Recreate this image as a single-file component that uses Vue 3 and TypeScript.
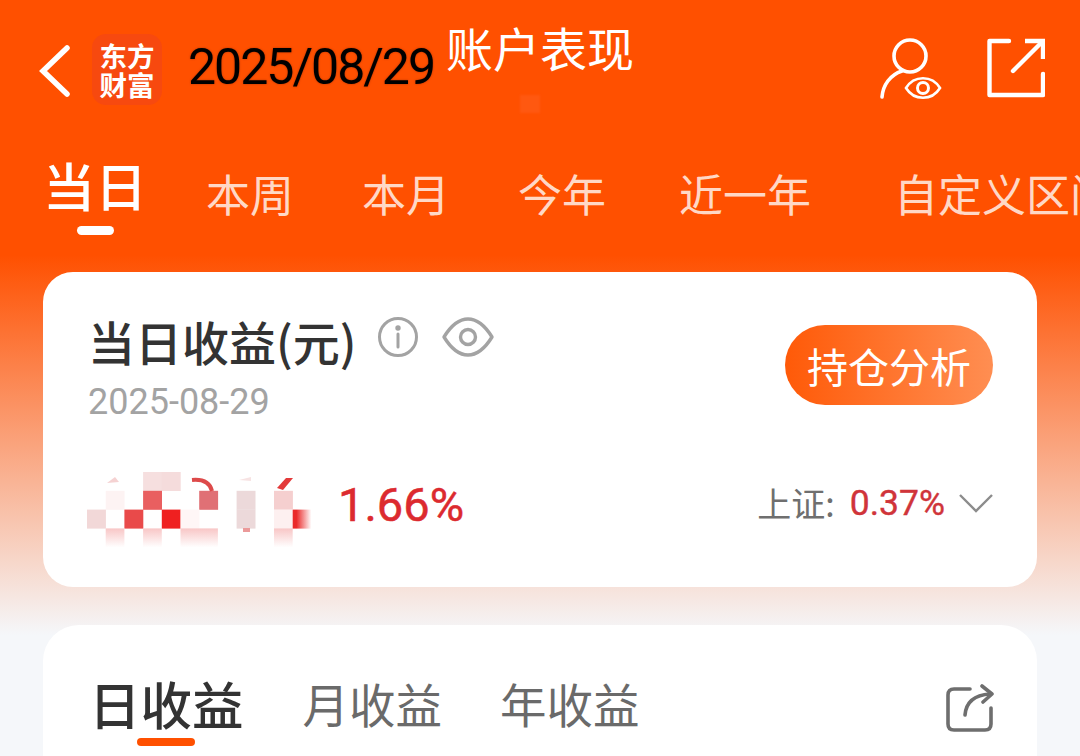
<template>
  <div class="page">
    <header class="topbar">
      <svg class="back" width="32" height="52" viewBox="0 0 32 52">
        <path d="M28 3 L4 26 L28 49" fill="none" stroke="#fff" stroke-width="5.5" stroke-linecap="round" stroke-linejoin="miter" />
      </svg>
      <div class="logo"><span>东方</span><span>财富</span></div>
      <span class="date">2025/08/29</span>
      <span class="title">账户表现</span>
      <i class="smudge"></i>
      <div class="top-icons">
        <svg width="62" height="62" viewBox="0 0 62 62" fill="none" stroke="#fff" stroke-width="3.6" stroke-linecap="round">
          <circle cx="30" cy="18" r="16" />
          <path d="M22 33 C10 37 3 47 2 59" />
          <path d="M26 50 C34 37 52 37 60 50 C52 63 34 63 26 50 Z" stroke-width="2.6" />
          <circle cx="43" cy="50" r="5.5" stroke-width="3" />
        </svg>
        <svg width="58" height="60" viewBox="0 0 58 60" fill="none" stroke="#fff" stroke-width="4.4" stroke-linecap="round" stroke-linejoin="round">
          <path d="M22 3 H2.5 V57 H56 V36" />
          <path d="M26 33 L55 4" />
          <path d="M38 3 H56 V21" stroke-linecap="butt" stroke-linejoin="miter" />
        </svg>
      </div>
    </header>

    <nav class="range-tabs">
      <span
        v-for="tab in rangeTabs"
        :key="tab"
        class="range-tab"
        :class="{ active: tab === activeRange }"
      >{{ tab }}</span>
    </nav>

    <section class="card summary">
      <div class="summary-top">
        <div>
          <div class="summary-title">
            <span>当日收益(元)</span>
            <svg class="info" width="42" height="42" viewBox="0 0 42 42" fill="none" stroke="#a3a3a3" stroke-width="3">
              <circle cx="21" cy="21" r="18.5" />
              <path d="M21 18 V31" stroke-linecap="round" />
              <circle cx="21" cy="12" r="1.2" fill="#a3a3a3" />
            </svg>
            <svg class="eye" width="52" height="42" viewBox="0 0 52 42" fill="none" stroke="#a3a3a3" stroke-width="3.4">
              <path d="M2 21 C10 8 18 3 26 3 C34 3 42 8 50 21 C42 34 34 39 26 39 C18 39 10 34 2 21 Z" stroke-linejoin="round" />
              <circle cx="26" cy="21" r="7.5" />
            </svg>
          </div>
          <div class="summary-date">2025-08-29</div>
        </div>
        <button class="analysis-btn">持仓分析</button>
      </div>

      <div class="summary-bottom">
        <div class="profit">
          <svg class="mosaic" width="228" height="78" viewBox="0 0 228 78">
            <defs>
              <linearGradient id="fadeDown" x1="0" y1="0" x2="0" y2="1">
                <stop offset="0" stop-color="#f8c6c6" />
                <stop offset="1" stop-color="#fff" />
              </linearGradient>
              <linearGradient id="fadeRight" x1="0" y1="0" x2="1" y2="0">
                <stop offset="0.2" stop-color="#ea2a2a" />
                <stop offset="1" stop-color="#fff" />
              </linearGradient>
            </defs>
            <rect
              v-for="cell in mosaicCells"
              :key="cell.col + '-' + cell.row"
              :x="cell.col * 18.7"
              :y="cell.row * 18.8"
              width="18.9"
              height="19"
              :fill="cell.color"
            />
            <rect x="18.7" y="56.4" width="18.7" height="19" fill="url(#fadeDown)" />
            <rect x="56.1" y="56.4" width="18.7" height="19" fill="url(#fadeDown)" />
            <rect x="93.5" y="56.4" width="37.4" height="19" fill="url(#fadeDown)" />
            <rect x="187" y="56.4" width="18.7" height="19" fill="url(#fadeDown)" />
            <rect x="205.7" y="37.6" width="18.7" height="19" fill="url(#fadeRight)" />
            <rect x="156" y="56" width="7" height="4" fill="#eb9a9a" />
            <path d="M105 8 C116 7 123 11 125 19" fill="none" stroke="#dd4a4a" stroke-width="4" />
            <path d="M190 16 L199 6 H206 L196 18 Z" fill="#e33a3a" />
            <path d="M20 11 L28 5 L32 10 Z" fill="#f5d2d2" />
            <path d="M152 8 L164 5 V9 Z" fill="#f7e3e3" />
          </svg>
          <span class="profit-rate">1.66%</span>
        </div>
        <div class="index">
          <span class="index-label">上证:</span>
          <span class="index-rate">0.37%</span>
          <svg width="34" height="20" viewBox="0 0 34 20" fill="none" stroke="#8c8c8c" stroke-width="2.4">
            <path d="M1 2 L17 18 L33 2" />
          </svg>
        </div>
      </div>
    </section>

    <section class="card chart-card">
      <div class="chart-tabs">
        <span
          v-for="tab in chartTabs"
          :key="tab"
          class="chart-tab"
          :class="{ active: tab === activeChart }"
        >{{ tab }}</span>
        <svg class="share" width="48" height="50" viewBox="0 0 48 50" fill="none" stroke="#6e6e6e" stroke-width="3.6" stroke-linecap="round" stroke-linejoin="round">
          <path d="M24 6 H8 C4 6 2 8 2 12 V41 C2 45 4 47 8 47 H39 C43 47 45 45 45 41 V25" />
          <path d="M19 32 C20 20 28 12 44 11" />
          <path d="M36 3 L46 11 L37 19" />
        </svg>
      </div>
    </section>
  </div>
</template>

<script setup lang="ts">
interface MosaicCell {
  col: number;
  row: number;
  color: string;
}

const rangeTabs = ['当日', '本周', '本月', '今年', '近一年', '自定义区间'];
const activeRange = '当日';

const chartTabs = ['日收益', '月收益', '年收益'];
const activeChart = '日收益';

// 打码区域
const mosaicCells: MosaicCell[] = [
  { col: 3, row: 0, color: '#f6dfdf' },
  { col: 4, row: 0, color: '#f5dcdc' },
  { col: 1, row: 1, color: '#fdf3f3' },
  { col: 3, row: 1, color: '#e95f60' },
  { col: 6, row: 1, color: '#e07075' },
  { col: 8, row: 1, color: '#ecd9da' },
  { col: 10, row: 1, color: '#f5cfcf' },
  { col: 0, row: 2, color: '#f2d8d8' },
  { col: 2, row: 2, color: '#e94a4a' },
  { col: 4, row: 2, color: '#ef2020' },
  { col: 5, row: 2, color: '#fff6f6' },
  { col: 8, row: 2, color: '#ecd9da' },
  { col: 10, row: 2, color: '#fdf0f0' }
];
</script>

<style>
html,
body {
  margin: 0;
  background: #f5f7fa;
}
</style>

<style scoped>
.page {
  width: 1080px;
  height: 756px;
  overflow: hidden;
  box-sizing: border-box;
  padding: 0 43px;
  font-family: "Noto Sans CJK SC", "Noto Sans", sans-serif;
  background: linear-gradient(180deg, #ff5000 0, #ff5000 255px, #f5f7fa 635px);
}

/* 顶部栏 */
.topbar {
  position: relative;
  height: 140px;
  display: flex;
  align-items: flex-start;
  margin-right: -8px;
}

.back {
  margin: 45px 0 0 -4px;
}

.logo {
  width: 70px;
  height: 71px;
  margin: 34px 0 0 21px;
  display: flex;
  flex-direction: column;
  align-items: center;
  justify-content: center;
  background: #f7490f;
  border-radius: 14px;
  color: #fff;
  font-size: 27.5px;
  font-weight: 700;
  line-height: 29px;
}

.date {
  margin: 36px 0 0 26px;
  color: #000;
  font-family: Roboto, sans-serif;
  font-size: 50px;
  letter-spacing: -2px;
  line-height: 62px;
  text-shadow: 0 0 2px rgba(80, 20, 0, 0.5);
}

.title {
  margin: 14px 0 0 12px;
  color: #fff;
  font-size: 47px;
  line-height: 66px;
}

.smudge {
  position: absolute;
  left: 477px;
  top: 95px;
  width: 20px;
  height: 18px;
  background: #ff5810;
  filter: blur(1px);
}

.top-icons {
  margin: 38px 0 0 auto;
  display: flex;
  gap: 45px;
  align-items: flex-start;
}

/* 区间标签 */
.range-tabs {
  height: 132px;
  display: flex;
  align-items: flex-start;
  white-space: nowrap;
}

.range-tab {
  margin-top: 26px;
  color: #ffd8c6;
  font-size: 44px;
  line-height: 54px;
}

.range-tab:nth-child(2) {
  margin-right: 68px;
}

.range-tab:nth-child(3) {
  margin-right: 68px;
}

.range-tab:nth-child(4) {
  margin-right: 73px;
}

.range-tab:nth-child(5) {
  margin-right: 83px;
}

.range-tab.active {
  position: relative;
  margin-top: 15px;
  margin-right: 59px;
  color: #fff;
  font-size: 52px;
  font-weight: 500;
  line-height: 60px;
}

.range-tab.active::after {
  content: "";
  position: absolute;
  left: 34px;
  bottom: -20px;
  width: 37px;
  height: 9px;
  border-radius: 5px;
  background: #fff;
}

/* 卡片 */
.card {
  background: #fff;
  box-sizing: border-box;
}

.summary {
  height: 315px;
  border-radius: 30px;
  padding: 40px 44px 0 45px;
}

.summary-top {
  display: flex;
  justify-content: space-between;
  align-items: flex-start;
}

.summary-title {
  display: flex;
  align-items: center;
  height: 58px;
  color: #333;
  font-size: 47px;
  font-weight: 500;
  line-height: 58px;
}

.info {
  margin-left: 21px;
  margin-top: -8px;
}

.eye {
  margin-left: 23px;
  margin-top: -8px;
}

.summary-date {
  margin-top: 6px;
  color: #a3a3a3;
  font-family: Roboto, sans-serif;
  font-size: 36px;
  line-height: 52px;
}

.analysis-btn {
  width: 208px;
  height: 80px;
  margin-top: 13px;
  padding: 0;
  border: none;
  border-radius: 40px;
  background: linear-gradient(90deg, #ff5a08, #ff8e52);
  color: #fff;
  font-family: inherit;
  font-size: 41px;
}

.summary-bottom {
  margin-top: 42px;
  display: flex;
  justify-content: space-between;
  align-items: flex-start;
}

.profit {
  display: flex;
  align-items: flex-start;
  margin-left: -1px;
}

.mosaic {
  margin-top: 2px;
  filter: blur(0.6px);
}

.profit-rate {
  margin: 5px 0 0 23px;
  color: #dc2a2f;
  font-family: Roboto, sans-serif;
  font-size: 47px;
  line-height: 60px;
  -webkit-text-stroke: 0.5px #dc2a2f;
}

.index {
  display: flex;
  align-items: center;
  margin-top: 8px;
}

.index-label {
  color: #6f6f6f;
  font-size: 34px;
}

.index-rate {
  margin-left: 15px;
  color: #d0343a;
  font-family: Roboto, sans-serif;
  font-size: 35.5px;
  -webkit-text-stroke: 0.4px #d0343a;
}

.index svg {
  margin-left: 14px;
}

.chart-card {
  margin-top: 38px;
  height: 200px;
  border-radius: 36px 36px 0 0;
  padding: 45px 43px 0 46px;
}

.chart-tabs {
  display: flex;
  align-items: flex-start;
}

.chart-tab {
  position: relative;
  margin-right: 58px;
  color: #6a6a6a;
  font-size: 46.5px;
  line-height: 66px;
}

.chart-tab.active {
  color: #333;
  font-size: 51.5px;
  font-weight: 500;
  margin-right: 59px;
}

.chart-tab.active::after {
  content: "";
  position: absolute;
  left: 48px;
  bottom: -10px;
  width: 58px;
  height: 8px;
  border-radius: 4px;
  background: #ff5000;
}

.share {
  margin-left: auto;
  margin-top: 13px;
}
</style>
